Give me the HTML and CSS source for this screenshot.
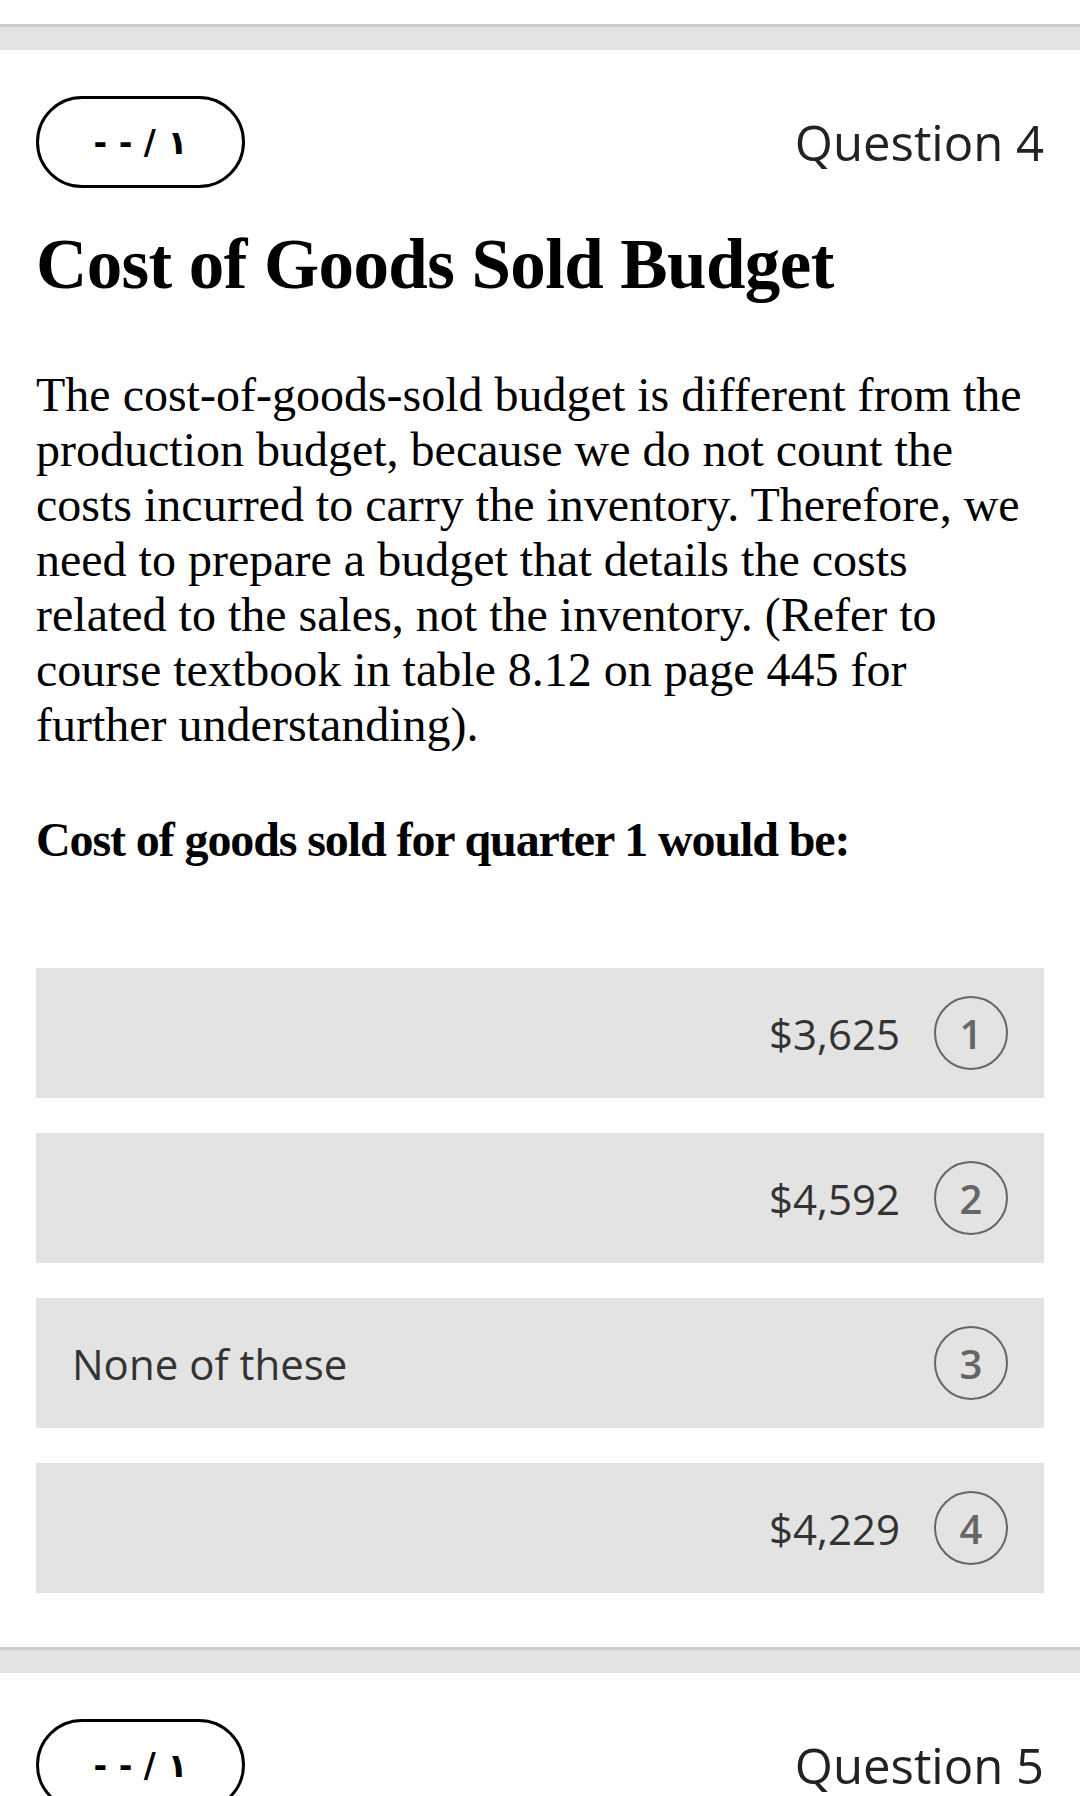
FILE: index.html
```
<!DOCTYPE html>
<html lang="en">

<head>
  <title>Question 4</title>
  <meta charset="utf-8" />
  <meta name="viewport" content="width=device-width, initial-scale=1.0">
  <link rel="stylesheet" href="styles.css">
</head>

<body>
  <div class="separator"></div>
  <section class="question">
    <div class="questionHead">
      <div class="score">- - / ١</div>
      <div class="questionNumber">Question 4</div>
    </div>
    <h2 class="questionTitle">Cost of Goods Sold Budget</h2>
    <p class="questionText">The cost-of-goods-sold budget is different from the production budget, because we do not count the costs incurred to carry the inventory. Therefore, we need to prepare a budget that details the costs related to the sales, not the inventory. (Refer to course textbook in table 8.12 on page 445 for further understanding).</p>
    <p class="questionAsk">Cost of goods sold for quarter 1 would be:</p>
    <ol class="options">
      <li class="option"><span class="optionLabel">$3,625</span><span class="optionNum">1</span></li>
      <li class="option"><span class="optionLabel">$4,592</span><span class="optionNum">2</span></li>
      <li class="option"><span class="optionLabel optionLeft">None of these</span><span class="optionNum">3</span></li>
      <li class="option"><span class="optionLabel">$4,229</span><span class="optionNum">4</span></li>
    </ol>
  </section>
  <div class="separator"></div>
  <section class="question">
    <div class="questionHead">
      <div class="score">- - / ١</div>
      <div class="questionNumber">Question 5</div>
    </div>
  </section>
</body>

</html>
```
FILE: styles.css
```
html,
body {
  margin: 0;
  background-color: white;
}

body {
  padding-top: 24px;
}

.separator {
  height: 23px;
  border-top: 3px solid hsl(0, 0%, 80%);
  background-color: hsl(0, 0%, 89%);
}

.question {
  padding: 46px 36px 54px;
}

.questionHead {
  display: flex;
  justify-content: space-between;
  align-items: center;
}

.score {
  box-sizing: border-box;
  width: 209px;
  height: 92px;
  border: 3px solid black;
  border-radius: 46px;
  display: flex;
  align-items: center;
  justify-content: center;
  font: bold 33px "DejaVu Sans", sans-serif;
  white-space: pre;
}

.questionNumber {
  font: 500 49px "Open Sans", sans-serif;
  color: #222;
}

.questionTitle {
  margin: 35px 0 0;
  font: bold 71px/82px "Liberation Serif", serif;
  letter-spacing: -0.6px;
}

.questionText {
  margin: 62px 0 0;
  padding-right: 16px;
  font: 48px/55px "Liberation Serif", serif;
}

.questionAsk {
  margin: 60px 0 0;
  font: bold 48px/55px "Liberation Serif", serif;
  letter-spacing: -1.1px;
}

.options {
  list-style: none;
  margin: 101px 0 0;
  padding: 0;
  display: flex;
  flex-direction: column;
  gap: 35px;
}

.option {
  height: 130px;
  padding: 0 36px;
  display: flex;
  align-items: center;
  justify-content: flex-end;
  gap: 34px;
  background-color: hsl(0, 0%, 89%);
  font: 42px "Open Sans", sans-serif;
  color: #333;
}

.optionLeft {
  margin-right: auto;
}

.optionNum {
  box-sizing: border-box;
  width: 74px;
  height: 74px;
  border: 2.5px solid #666;
  border-radius: 50%;
  display: flex;
  align-items: center;
  justify-content: center;
  font-size: 40px;
  font-weight: 600;
  color: #666;
}
```
